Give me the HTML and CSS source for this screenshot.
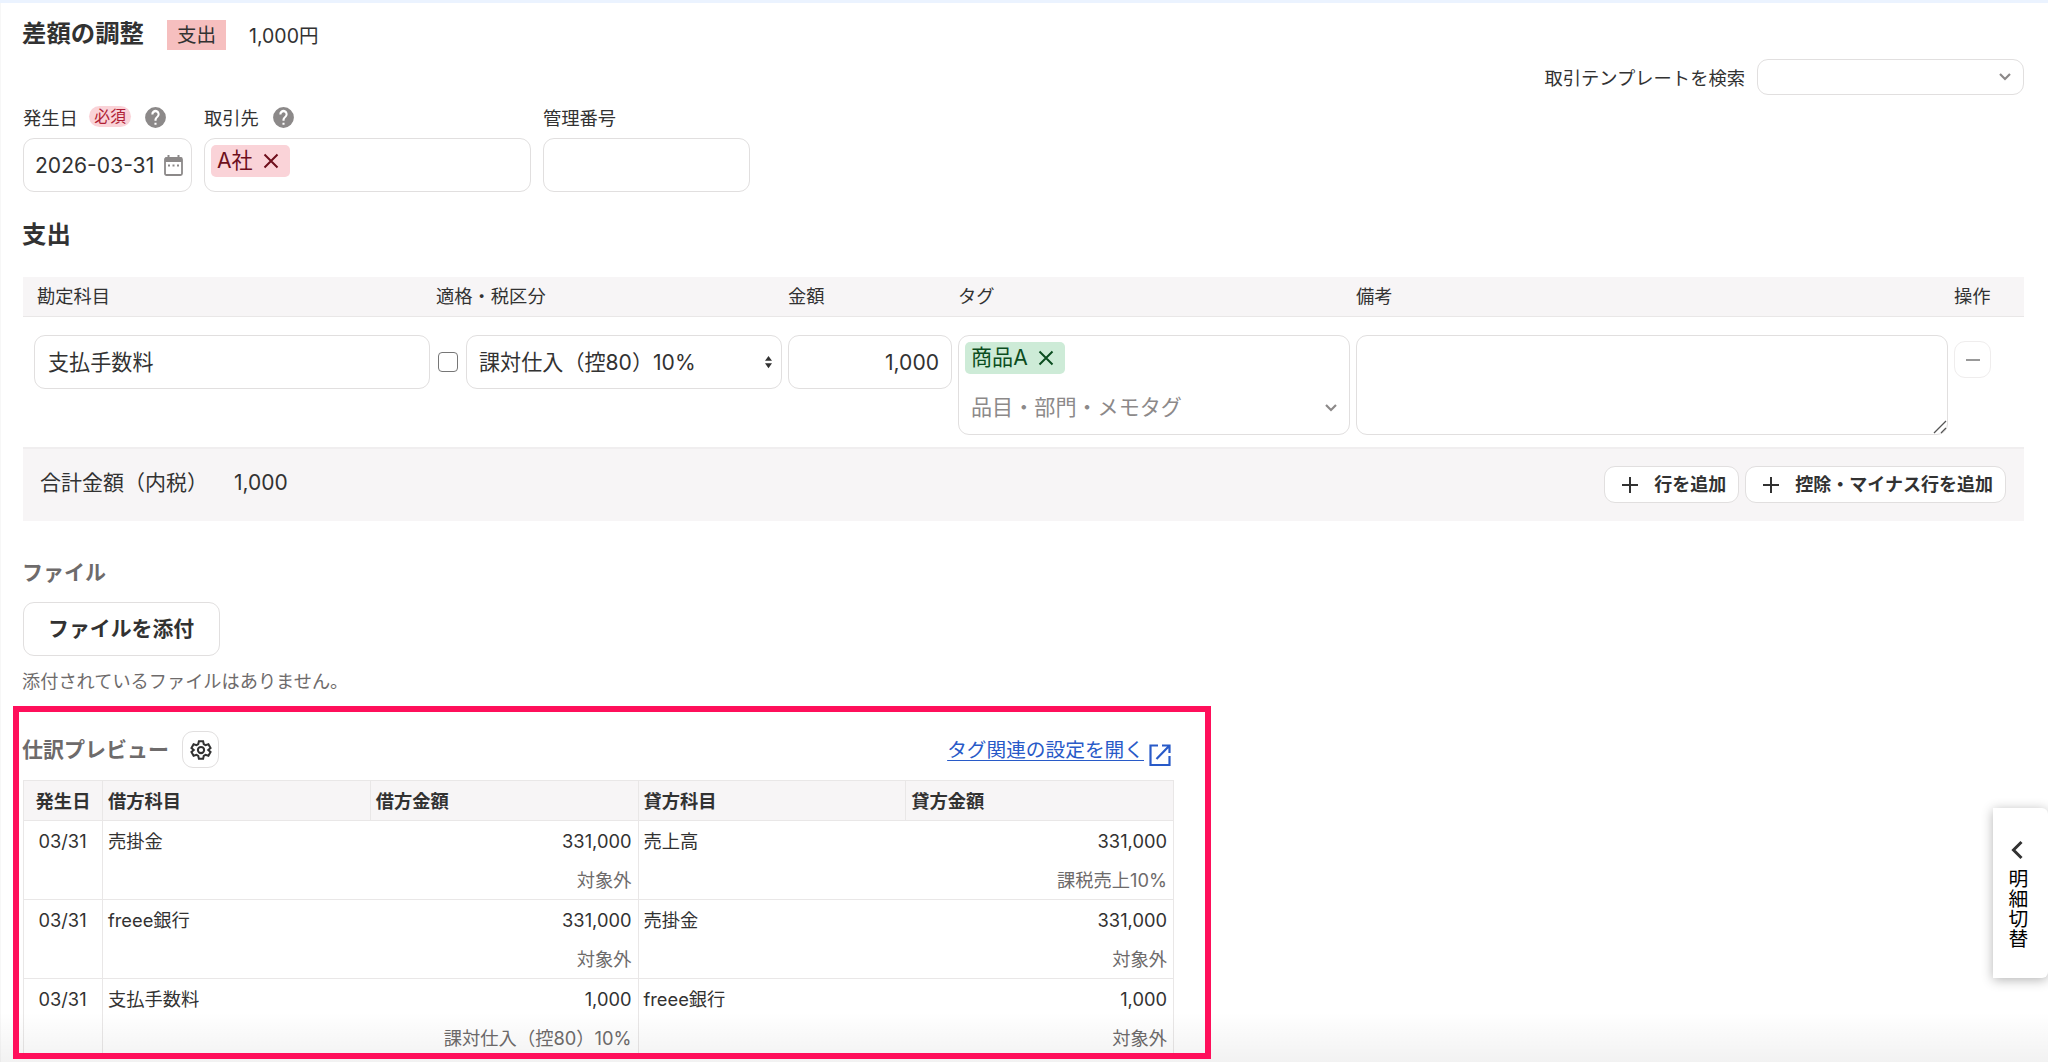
FILE: index.html
```
<!DOCTYPE html>
<html lang="ja">
<head>
    <meta charset="UTF-8">
    <meta name="viewport" content="width=device-width, initial-scale=1.0">
    <title>差額の調整</title>
    <link rel="stylesheet" href="styles.css">
</head>
<body>
    <main class="page">
        <header class="page-head">
            <h1 class="title">差額の調整</h1>
            <span class="type-label">支出</span>
            <span class="head-amount">1,000円</span>
            <div class="template-search">
                <label>取引テンプレートを検索</label>
                <div class="search-box">
                    <svg class="chevron" viewBox="0 0 14 10"><path d="M2 2l5 5 5-5"/></svg>
                </div>
            </div>
        </header>

        <section class="fields">
            <div class="field field-date">
                <div class="field-label">
                    <span>発生日</span>
                    <span class="required">必須</span>
                    <svg class="help" viewBox="0 0 24 24"><path d="M12 2a10 10 0 1 0 0 20 10 10 0 0 0 0-20zm1 17h-2v-2h2v2zm2.07-7.75l-.9.92C13.45 12.9 13 13.5 13 15h-2v-.5c0-1.1.45-2.1 1.17-2.83l1.24-1.26A2 2 0 1 0 10 9H8a4 4 0 1 1 7.07 2.25z"/></svg>
                </div>
                <div class="input date-input">
                    <span>2026-03-31</span>
                    <svg class="calendar" viewBox="0 0 19 21"><path d="M4.500 0v3M14.500 0v3" stroke-width="2"/><rect x="1" y="3" width="17" height="17" rx="1.500" stroke-width="1.800"/><path d="M1 2.500h17v4.500H1z" class="solid"/><path d="M4 10.500h2M8.500 10.500h2M13 10.500h2" stroke-width="1.800"/></svg>
                </div>
            </div>
            <div class="field field-partner">
                <div class="field-label">
                    <span>取引先</span>
                    <svg class="help" viewBox="0 0 24 24"><path d="M12 2a10 10 0 1 0 0 20 10 10 0 0 0 0-20zm1 17h-2v-2h2v2zm2.07-7.75l-.9.92C13.45 12.9 13 13.5 13 15h-2v-.5c0-1.1.45-2.1 1.17-2.83l1.24-1.26A2 2 0 1 0 10 9H8a4 4 0 1 1 7.07 2.25z"/></svg>
                </div>
                <div class="input partner-input">
                    <span class="chip chip-red">A社 <svg class="close" viewBox="0 0 16 16"><path d="M1.500 1.500l13 13M14.500 1.500l-13 13"/></svg></span>
                </div>
            </div>
            <div class="field field-number">
                <div class="field-label"><span>管理番号</span></div>
                <div class="input"></div>
            </div>
        </section>

        <h2 class="title section-title">支出</h2>

        <section class="lines">
            <div class="lines-row lines-head">
                <span class="head-account">勘定科目</span>
                <span class="head-tax">適格・税区分</span>
                <span>金額</span>
                <span>タグ</span>
                <span>備考</span>
                <span>操作</span>
            </div>
            <div class="lines-row lines-body">
                <div class="input account-input">支払手数料</div>
                <div class="tax-cell">
                    <span class="checkbox"></span>
                    <div class="input tax-select">
                        <span>課対仕入（控80）10%</span>
                        <svg class="updown" viewBox="0 0 8 14"><path d="M4 0l4 5.500H0zM4 14l4-5.500H0z"/></svg>
                    </div>
                </div>
                <div class="input amount-input">1,000</div>
                <div class="input tag-input">
                    <span class="chip chip-green">商品A <svg class="close" viewBox="0 0 16 16"><path d="M1.500 1.500l13 13M14.500 1.500l-13 13"/></svg></span>
                    <div class="tag-search">
                        <span>品目・部門・メモタグ</span>
                        <svg class="chevron" viewBox="0 0 14 10"><path d="M2 2l5 5 5-5"/></svg>
                    </div>
                </div>
                <div class="input note-input">
                    <svg class="resizer" viewBox="0 0 14 14"><path d="M1 13L13 1M8 13l5-5"/></svg>
                </div>
                <button class="icon-btn remove-btn"><svg viewBox="0 0 16 16"><path d="M1 8h14"/></svg></button>
            </div>
            <div class="lines-foot">
                <span>合計金額（内税）</span>
                <span class="total">1,000</span>
                <div class="foot-buttons">
                    <button class="add-btn"><svg viewBox="0 0 18 18"><path d="M9 1v16M1 9h16"/></svg>行を追加</button>
                    <button class="add-btn"><svg viewBox="0 0 18 18"><path d="M9 1v16M1 9h16"/></svg>控除・マイナス行を追加</button>
                </div>
            </div>
        </section>

        <section class="files">
            <h3 class="sub-title">ファイル</h3>
            <button class="attach-btn">ファイルを添付</button>
            <p class="no-files">添付されているファイルはありません。</p>
        </section>

        <section class="preview">
            <div class="preview-head">
                <h3 class="sub-title">仕訳プレビュー</h3>
                <button class="icon-btn gear-btn">
                    <svg viewBox="0 0 24 24"><path d="M9.700 2.500h4.600l.7 3.200 1.900 1.100 3.200-1 2.300 4-2.500 2.200v0l2.500 2.200-2.300 4-3.200-1-1.900 1.100-.7 3.200H9.700L9 18.300l-1.900-1.100-3.200 1-2.300-4L4.100 12 1.600 9.800l2.300-4 3.200 1L9 5.700z"/><circle cx="12" cy="12" r="3.400"/></svg>
                </button>
                <a class="tag-link" href="#"><span>タグ関連の設定を開く</span><svg viewBox="0 0 24 24"><path d="M10 2.500H2.500v19.500h19V13M14 2.500h7.500V10M21.500 2.500L8.500 16"/></svg></a>
            </div>
            <table class="journal">
                <thead>
                    <tr>
                        <th class="col-date">発生日</th>
                        <th>借方科目</th>
                        <th>借方金額</th>
                        <th>貸方科目</th>
                        <th>貸方金額</th>
                    </tr>
                </thead>
                <tbody>
                    <tr>
                        <td class="date">03/31</td>
                        <td class="account">売掛金</td>
                        <td class="amount">331,000<small>対象外</small></td>
                        <td class="account">売上高</td>
                        <td class="amount">331,000<small>課税売上10%</small></td>
                    </tr>
                    <tr>
                        <td class="date">03/31</td>
                        <td class="account">freee銀行</td>
                        <td class="amount">331,000<small>対象外</small></td>
                        <td class="account">売掛金</td>
                        <td class="amount">331,000<small>対象外</small></td>
                    </tr>
                    <tr>
                        <td class="date">03/31</td>
                        <td class="account">支払手数料</td>
                        <td class="amount">1,000<small>課対仕入（控80）10%</small></td>
                        <td class="account">freee銀行</td>
                        <td class="amount">1,000<small>対象外</small></td>
                    </tr>
                </tbody>
            </table>
        </section>
    </main>

    <div class="bottom-fade"></div>
    <div class="highlight"></div>
    <aside class="side-tab">
        <svg viewBox="0 0 12 20"><path d="M10.500 2L2.500 10l8 8"/></svg>
        <span>明細切替</span>
    </aside>
</body>
</html>
```
FILE: styles.css
```
* {
    box-sizing: border-box;
}

body {
    margin: 0;
    position: relative;
    height: 1062px;
    overflow: hidden;
    background: #fff;
    color: #323232;
    font-family: Inter, "Noto Sans CJK JP", sans-serif;
    font-size: 18.3px;
    line-height: 24px;
    border-top: 3px solid #ebf3ff;
}

svg {
    display: block;
    flex: none;
    fill: none;
    stroke: currentColor;
}

button {
    display: flex;
    align-items: center;
    font: inherit;
    color: inherit;
    background: #fff;
    border: 1px solid #e1dfdf;
}

.page {
    height: 1059px;
    padding: 0 24px 0 22px;
    border-left: 1px solid #f7f7f7;
    overflow: hidden;
}

.title {
    margin: 0 0 0 -1px;
    font-size: 24.4px;
    font-weight: 700;
    line-height: 32px;
}

/* header */
.page-head {
    display: flex;
    align-items: flex-start;
    height: 99px;
    padding-top: 14px;
}
.type-label {
    width: 59px;
    height: 30px;
    margin: 3px 23px 0 23px;
    background: #f6bfbf;
    font-size: 19.6px;
    line-height: 30px;
    text-align: center;
}
.head-amount {
    margin-top: 4px;
    font-size: 19.5px;
    line-height: 30px;
}
.template-search {
    display: flex;
    align-items: center;
    margin: 42px 0 0 auto;
}
.template-search label {
    padding-top: 1px;
}
.search-box {
    display: flex;
    align-items: center;
    justify-content: flex-end;
    width: 267px;
    height: 36px;
    margin-left: 12px;
    padding-right: 11px;
    border: 1px solid #e1dfdf;
    border-radius: 11px;
}
.chevron {
    width: 14px;
    height: 10px;
    stroke: #8c8989;
    stroke-width: 2.2;
}

/* fields */
.fields {
    display: flex;
    gap: 12px;
}
.field-date {
    width: 169px;
}
.field-partner {
    width: 327px;
}
.field-number {
    width: 207px;
}
.field-label {
    display: flex;
    align-items: center;
    height: 30px;
    margin-bottom: 6px;
    padding-top: 1px;
}
.required {
    height: 21px;
    margin: -3px 0 0 11px;
    padding: 0 5.5px;
    border-radius: 11px;
    background: #fad3d8;
    color: #b01e35;
    font-size: 15.8px;
    line-height: 21px;
}
.help {
    width: 25px;
    height: 25px;
    margin-left: 12px;
    fill: #8c8989;
    stroke: none;
}
.input {
    height: 54px;
    border: 1px solid #e1dfdf;
    border-radius: 11px;
    background: #fff;
    font-size: 21.1px;
    line-height: 53px;
}
.date-input {
    display: flex;
    align-items: center;
    justify-content: space-between;
    padding: 0 8px 0 11px;
}
.calendar {
    width: 19px;
    height: 21px;
    color: #8c8989;
}
.calendar .solid {
    fill: currentColor;
    stroke: none;
}
.partner-input {
    padding: 6px;
}
.chip {
    display: flex;
    align-items: center;
    width: max-content;
    height: 32px;
    padding: 0 11px 0 6px;
    border-radius: 5px;
    line-height: 30px;
}
.chip-red {
    background: #fad3d8;
    color: #6e0f1c;
}
.chip-green {
    background: #cdebd7;
    color: #0b4d20;
}
.close {
    width: 16px;
    height: 16px;
    margin-left: 10px;
    stroke-width: 2;
}

.section-title {
    margin-top: 26px;
}

/* detail lines */
.lines {
    margin-top: 27px;
}
.lines-row {
    display: grid;
    grid-template-columns: 396px 346px 164px 392px 592px 38px;
    column-gap: 6px;
    padding-left: 11px;
}
.lines-head {
    height: 40px;
    border-bottom: 1px solid #e9e7e7;
    background: #f7f5f6;
    line-height: 38px;
}
.head-account {
    padding-left: 3px;
}
.lines-body {
    height: 130px;
    padding-top: 18px;
}
.account-input {
    padding-left: 13px;
}
.tax-cell {
    display: flex;
}
.checkbox {
    width: 20px;
    height: 20px;
    margin: 17px 8px 0 2px;
    border: 1.5px solid #767676;
    border-radius: 4px;
}
.tax-select {
    display: flex;
    align-items: center;
    justify-content: space-between;
    flex: 1;
    padding: 0 9px 0 12px;
}
.updown {
    width: 7px;
    height: 14px;
    fill: #323232;
    stroke: none;
}
.amount-input {
    padding-right: 12px;
    text-align: right;
}
.tag-input {
    height: 100px;
    padding: 6px;
}
.tag-search {
    display: flex;
    align-items: center;
    justify-content: space-between;
    margin-top: 18px;
    padding: 0 5px 0 6px;
    color: #8c8989;
    line-height: 32px;
}
.note-input {
    display: flex;
    align-items: flex-end;
    justify-content: flex-end;
    height: 100px;
}
.resizer {
    width: 14px;
    height: 14px;
    stroke: #555;
    stroke-width: 1.3;
}
.icon-btn {
    justify-content: center;
    width: 37px;
    height: 37px;
    padding: 0;
    border-radius: 11px;
}
.remove-btn {
    margin-top: 6px;
    border-color: #efeded;
    color: #999;
}
.remove-btn svg {
    width: 16px;
    stroke-width: 2;
}
.lines-foot {
    display: flex;
    height: 74px;
    padding: 15px 18px 0 17px;
    border-top: 2px solid #f0eeef;
    background: #f7f5f6;
    font-size: 21px;
    line-height: 38px;
}
.total {
    margin-left: 26px;
}
.foot-buttons {
    display: flex;
    gap: 6px;
    margin: 2px 0 0 auto;
}
.add-btn {
    height: 37px;
    padding: 0 12px 0 16px;
    border-radius: 11px;
    font-size: 18px;
    font-weight: 700;
    line-height: 34px;
}
.add-btn svg {
    width: 18px;
    margin-right: 15px;
    stroke-width: 2;
}

/* files */
.sub-title {
    margin: 0 0 0 -1px;
    color: #6e6b6b;
    font-size: 21px;
    font-weight: 700;
    line-height: 32px;
}
.files {
    padding-top: 36px;
}
.attach-btn {
    height: 54px;
    margin-top: 13px;
    padding: 0 25px 1px 24px;
    border-radius: 11px;
    font-size: 20.9px;
    font-weight: 700;
}
.no-files {
    margin: 13px 0 0 -1px;
    color: #6e6b6b;
    font-size: 18.2px;
}

/* journal preview */
.preview {
    width: 1151px;
    margin-top: 38px;
}
.preview-head {
    display: flex;
    align-items: center;
    height: 37px;
}
.gear-btn {
    margin-left: 13px;
}
.gear-btn svg {
    width: 22px;
    height: 22px;
    stroke-width: 2.2;
}
.tag-link {
    display: flex;
    margin-left: auto;
    color: #285ac8;
    font-size: 19.7px;
    text-underline-offset: 3px;
}
.tag-link svg {
    width: 24px;
    height: 24px;
    margin: 5px 2px -5px 4px;
    stroke-width: 2.2;
}
.journal {
    width: 1151px;
    margin-top: 12px;
    border-collapse: collapse;
    table-layout: fixed;
}
.journal th {
    height: 40px;
    padding: 0 5px;
    border: 1px solid #e9e7e7;
    background: #f7f5f6;
    text-align: left;
}
.journal .col-date {
    width: 79px;
    text-align: center;
}
.journal td {
    height: 79px;
    padding: 8px 6px 0 5px;
    border-bottom: 1px solid #e9e7e7;
    vertical-align: top;
}
.journal .date {
    border-left: 1px solid #e9e7e7;
    border-right: 1px solid #e9e7e7;
    text-align: center;
}
.journal .amount {
    border-right: 1px solid #e9e7e7;
    text-align: right;
}
.journal small {
    display: block;
    margin-top: 15px;
    color: #6e6b6b;
    font-size: inherit;
}

/* overlays */
.bottom-fade {
    position: absolute;
    left: 0;
    right: 0;
    bottom: 0;
    height: 50px;
    background: linear-gradient(rgba(0, 0, 0, 0), rgba(0, 0, 0, 0.05));
}
.highlight {
    position: absolute;
    left: 13px;
    top: 703px;
    width: 1198px;
    height: 353px;
    border: 6px solid #ff0f5b;
}
.side-tab {
    position: absolute;
    right: 0;
    top: 805px;
    display: flex;
    flex-direction: column;
    align-items: center;
    width: 55px;
    height: 170px;
    padding: 32px 7px 0 0;
    background: #fff;
    border-radius: 0 6px 6px 0;
    box-shadow: 0 2px 12px rgba(0, 0, 0, 0.3);
    color: #000;
    font-size: 19.8px;
}
.side-tab svg {
    width: 12px;
    height: 20px;
    stroke: #323232;
    stroke-width: 3;
}
.side-tab span {
    margin-top: 9px;
    writing-mode: vertical-rl;
}
```
